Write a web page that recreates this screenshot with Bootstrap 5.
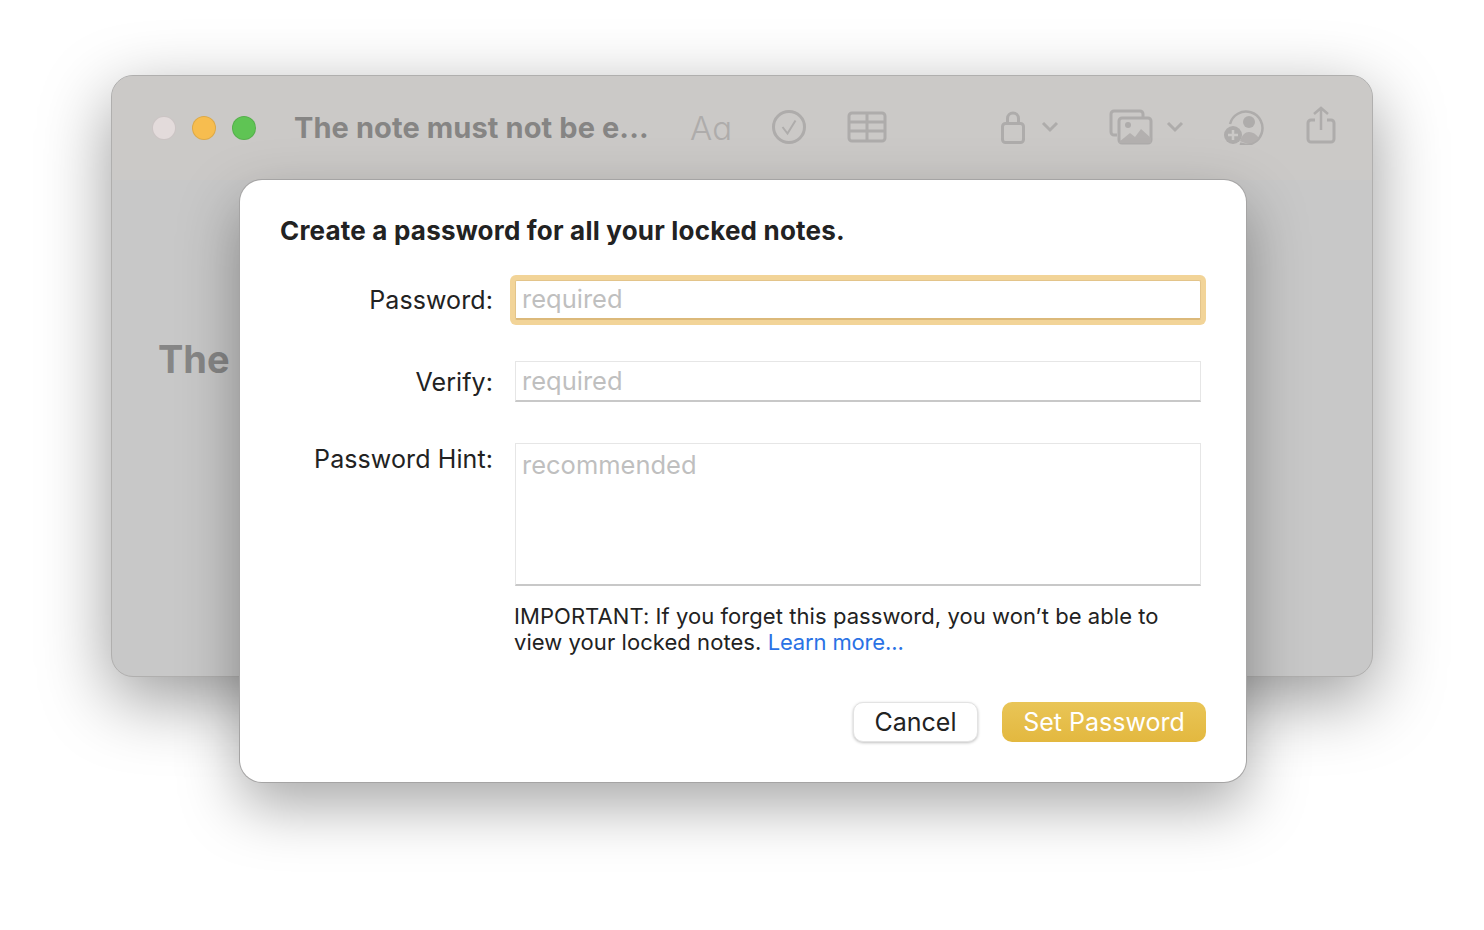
<!DOCTYPE html>
<html lang="en">
  <head>
    <meta charset="UTF-8" />
    <meta name="viewport" content="width=device-width, initial-scale=1.0" />
    <link href="https://cdn.jsdelivr.net/npm/bootstrap@5.3.3/dist/css/bootstrap.min.css" rel="stylesheet" />
    <title>Create a password</title>
    <style>
      body { background: #fff; font-family: Inter, "Liberation Sans", sans-serif; overflow: hidden; }
      .stage { width: 1484px; height: 930px; padding: 75px 111px 0; }
      .note-window { position: relative; width: 1262px; height: 602px; background: #c8c8c8; border: 1px solid #b0afae; border-radius: 22px; box-shadow: 0 22px 70px rgba(0,0,0,.4); }
      .note-toolbar { height: 104px; background: #cbc9c7; border-radius: 21px 21px 0 0; padding: 0 32px 0 40px; }
      .traffic { width: 24px; height: 24px; border-radius: 50%; margin-right: 16px; border: 1px solid rgba(0,0,0,.1); }
      .t-close { background: #e3dbdb; }
      .t-min { background: #f7bd4f; }
      .t-max { background: #5fc454; }
      .note-title { font-size: 29px; font-weight: 700; color: #868584; margin-left: 22px; letter-spacing: .1px; width: 376px; white-space: nowrap; }
      .tb-icon { stroke: #aeacab; fill: none; stroke-width: 3; flex: none; margin-bottom: 2px; }
      .aa { font-size: 33px; color: #aeacab; font-weight: 300; line-height: 1; width: 42px; margin-left: 20px; }
      .i-check { margin-left: 39px; }
      .i-table { margin-left: 40px; }
      .i-lock { margin-left: 114px; }
      .i-chev { margin-left: 16px; }
      .i-media { margin-left: 50px; }
      .i-chev2 { margin-left: 13px; }
      .i-collab { margin-left: 40px; }
      .i-share { margin-left: 40px; margin-bottom: 7px; }
      .note-text { font-size: 38px; font-weight: 700; color: #868686; padding: 156px 0 0 46px; line-height: 46px; }
      .pw-dialog { position: absolute; left: 128px; top: 104px; width: 1006px; height: 602px; background: #fff; border-radius: 22px; box-shadow: 0 0 0 1px #a5a4a4, 0 24px 60px rgba(0,0,0,.34); padding: 33px 40px 0; }
      .pw-head { font-size: 26px; font-weight: 700; color: #222; line-height: 36px; margin-bottom: 31px; letter-spacing: .2px; white-space: nowrap; }
      .pw-row { display: flex; }
      .pw-gap { margin-top: 41px; }
      .pw-label { width: 213px; flex: none; text-align: right; font-size: 25px; letter-spacing: .1px; color: #222; line-height: 36px; white-space: nowrap; }
      .pw-field { width: 686px; margin-left: 22px; border: 1px solid #e6e6e6; border-bottom: 2px solid #c8c8c8; font-size: 25.5px; color: #bfbfbf; padding: 0 6px; background: #fff; line-height: 36px; }
      .f-focus { height: 40px; border-radius: 2px; box-shadow: 0 0 0 5px #f2d498; border-color: #e3c48a; border-bottom-color: #dcb97a; }
      .f-plain { height: 41px; padding-top: 1px; }
      .f-area { height: 143px; padding-top: 3px; }
      .l-area { margin-top: -2px; }
      .pw-note { margin-left: 234px; font-size: 22px; letter-spacing: .06px; line-height: 26px; color: #222; margin-top: 17px; white-space: nowrap; }
      .pw-note a { color: #2a72e5; text-decoration: none; letter-spacing: -.15px; }
      .pw-foot { margin-top: 47px; }
      .pw-btn { height: 40px; border-radius: 10px; font-size: 25px; line-height: 38px; padding: 0; }
      .b-cancel { width: 125px; background: #fff; color: #222; border: 1px solid #e3e3e3; box-shadow: 0 1px 3px rgba(0,0,0,.25); }
      .b-set { width: 204px; margin-left: 24px; color: #fff; border: 0; background: linear-gradient(#e9c557, #e3b83f); }
    </style>
  </head>
  <body>
    <div class="stage">
      <div class="note-window">
        <div class="note-toolbar d-flex align-items-center">
          <span class="traffic t-close"></span>
          <span class="traffic t-min"></span>
          <span class="traffic t-max"></span>
          <span class="note-title">The note must not be e...</span>
          <span class="aa">Aɑ</span>
          <!-- checklist -->
          <svg class="tb-icon i-check" width="36" height="36" viewBox="0 0 36 36"><circle cx="18" cy="18" r="15.5"/><path d="M11.5 18l5 6.5 8-13" stroke-width="2"/></svg>
          <!-- table -->
          <svg class="tb-icon i-table" width="40" height="32" viewBox="0 0 40 32"><rect x="2" y="2" width="36" height="28" rx="3"/><path d="M2 11h36M2 20h36M20 2v28"/></svg>
          <!-- lock -->
          <svg class="tb-icon i-lock" width="24" height="33" viewBox="0 0 24 33" stroke-width="2.500"><rect x="1.500" y="12.500" width="21" height="19" rx="3"/><path d="M6.500 12.500V7.500a5.500 5.500 0 0 1 11 0v5"/></svg>
          <svg class="tb-icon i-chev" width="18" height="12" viewBox="0 0 18 12"><path d="M2 2l7 7 7-7"/></svg>
          <!-- media -->
          <svg class="tb-icon i-media" width="44" height="36" viewBox="0 0 44 36"><path d="M8 26H5a3 3 0 0 1-3-3V5a3 3 0 0 1 3-3h26a3 3 0 0 1 3 3v3"/><rect x="10" y="9" width="32" height="25" rx="3"/><circle cx="19" cy="16" r="3" fill="#aeacab" stroke="none"/><path d="M10 33l11-9 5 4 6-8 10 9v5H10z" fill="#b3b0af" stroke="none"/></svg>
          <svg class="tb-icon i-chev2" width="18" height="12" viewBox="0 0 18 12"><path d="M2 2l7 7 7-7"/></svg>
          <!-- collaborate -->
          <svg class="tb-icon i-collab" width="42" height="36" viewBox="0 0 42 36"><path d="M6 15a16.500 16.500 0 1 1 10 19.500" stroke-width="2.500"/><circle cx="25" cy="13" r="6" fill="#aeacab" stroke="none"/><path d="M16 32c2-6 5-9 9-9s7 2 10 6c-5 6-12 7-19 3z" fill="#b3b0af" stroke="none"/><circle cx="9" cy="26" r="9" fill="#aeacab" stroke="none"/><path d="M9 21v10M4 26h10" stroke="#cbc9c7" stroke-width="2.500"/></svg>
          <!-- share -->
          <svg class="tb-icon i-share" width="30" height="38" viewBox="0 0 30 38"><path d="M9 14H5a3 3 0 0 0-3 3v16a3 3 0 0 0 3 3h20a3 3 0 0 0 3-3V17a3 3 0 0 0-3-3h-4"/><path d="M15 24V2M8 8l7-6 7 6" stroke-width="2.500"/></svg>
        </div>
        <div class="note-text">The</div>

        <div class="pw-dialog">
          <div class="pw-head">Create a password for all your locked notes.</div>
          <div class="pw-row align-items-center">
            <div class="pw-label">Password:</div>
            <div class="pw-field f-focus">required</div>
          </div>
          <div class="pw-row align-items-center pw-gap">
            <div class="pw-label">Verify:</div>
            <div class="pw-field f-plain">required</div>
          </div>
          <div class="pw-row align-items-start pw-gap">
            <div class="pw-label l-area">Password Hint:</div>
            <div class="pw-field f-area">recommended</div>
          </div>
          <div class="pw-note">IMPORTANT: If you forget this password, you won’t be able to<br />view your locked notes. <a href="#">Learn more...</a></div>
          <div class="d-flex justify-content-end pw-foot">
            <button type="button" class="btn pw-btn b-cancel">Cancel</button>
            <button type="button" class="btn pw-btn b-set">Set Password</button>
          </div>
        </div>
      </div>
    </div>
    <script src="https://cdn.jsdelivr.net/npm/bootstrap@5.3.3/dist/js/bootstrap.bundle.min.js"></script>
  </body>
</html>
